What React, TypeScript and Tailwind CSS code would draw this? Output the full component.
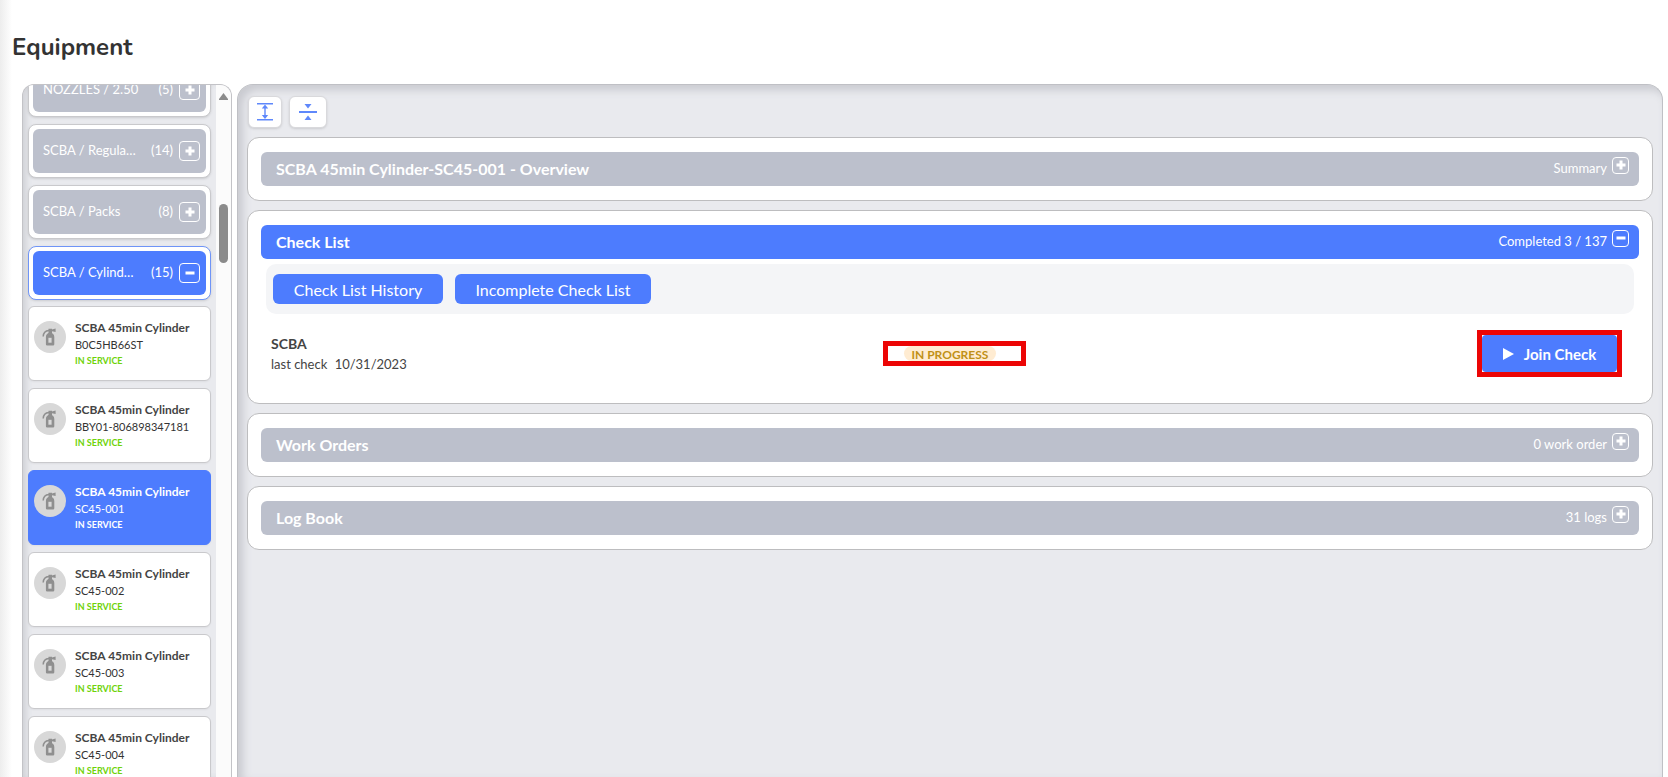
import React from "react";

type Category = { name: string; count: number; open?: boolean };

const categories: Category[] = [
  { name: "NOZZLES / 2.50", count: 5 },
  { name: "SCBA / Regulators", count: 14 },
  { name: "SCBA / Packs", count: 8 },
  { name: "SCBA / Cylinders", count: 15, open: true },
];

const items = [
  "B0C5HB66ST",
  "BBY01-806898347181",
  "SC45-001",
  "SC45-002",
  "SC45-003",
  "SC45-004",
];

function Sign({ minus }: { minus?: boolean }) {
  return (
    <svg viewBox="0 0 10 10" className="size-[10px]" fill="currentColor" aria-hidden="true">
      <rect x="0.5" y="3.5" width="9" height="3" />
      {!minus && <rect x="3.5" y="0.5" width="3" height="9" />}
    </svg>
  );
}

function Extinguisher() {
  return (
    <svg viewBox="0 0 32 32" className="size-8" aria-hidden="true">
      <circle cx="16" cy="16" r="16" fill="#d8d8d8" />
      <path d="M9.2 15.600C9.300 11.500 11.200 9.600 15 9.400" fill="none" stroke="#8f8f8f" strokeWidth="1.500" />
      <path d="M14.500 7.800h3.500v.7l3.600-.9v3.500l-3.600-.8V12h-3.500z" fill="#8f8f8f" />
      <path d="M11.900 16c0-2.600 1.600-4.200 4.200-4.200s4.200 1.600 4.200 4.200v7.200a1.200 1.200 0 0 1-1.200 1.200h-6a1.200 1.200 0 0 1-1.200-1.200z" fill="#8f8f8f" />
      <rect x="14.400" y="16.800" width="3.200" height="4.900" fill="#d8d8d8" />
    </svg>
  );
}

function CategoryCard({ name, count, open }: Category) {
  return (
    <div className={`rounded-lg border bg-white p-1 shadow-sm ${open ? "border-[#6f94f7]" : "border-[#c9c9cc]"}`}>
      <button
        type="button"
        aria-expanded={!!open}
        className={`flex h-11 w-full items-center rounded-md pl-[10px] pr-[6px] text-left text-[13px] text-white ${open ? "bg-[#4d7cfe]" : "bg-[#bcc0cc]"}`}
      >
        <span className="w-24 truncate pb-px">{name}</span>
        <span className="ml-auto mr-[6px] pb-px">({count})</span>
        <span className="flex h-5 w-[21px] items-center justify-center rounded border border-white">
          <Sign minus={open} />
        </span>
      </button>
    </div>
  );
}

function ItemCard({ code, selected }: { code: string; selected: boolean }) {
  return (
    <li>
      <button
        type="button"
        className={`flex h-[75px] w-full items-start rounded-md border pl-[5px] pt-3 text-left shadow-xs ${selected ? "border-[#4d7cfe] bg-[#4d7cfe] text-white" : "border-[#c9c9cc] bg-white text-[#333]"}`}
      >
        <span className="pt-[2px]">
          <Extinguisher />
        </span>
        <span className="ml-[9px] flex flex-col">
          <span className={`text-xs font-bold leading-[17px] ${selected ? "" : "text-[#444]"}`}>SCBA 45min Cylinder</span>
          <span className="text-[11px] leading-[17px]">{code}</span>
          <span className={`text-[9px] font-bold leading-[15px] ${selected ? "" : "text-[#6fd30a]"}`}>IN SERVICE</span>
        </span>
      </button>
    </li>
  );
}

function Section({ title, info, open, children }: { title: string; info: string; open?: boolean; children?: React.ReactNode }) {
  return (
    <section className="rounded-xl border border-[#bdbdbf] bg-white px-[13px] py-[14px]">
      <button
        type="button"
        aria-expanded={!!open}
        className={`flex h-[34px] w-full items-center rounded-md pl-[15px] pr-[10px] text-white ${open ? "bg-[#4d7cfe]" : "bg-[#bcc0cc]"}`}
      >
        <span className="text-base font-bold">{title}</span>
        <span className="ml-auto flex items-start gap-[5px] pb-1 text-[13px] leading-5">
          <span className="pt-px">{info}</span>
          <span className="flex size-[17px] items-center justify-center rounded border border-white">
            <Sign minus={open} />
          </span>
        </span>
      </button>
      {children}
    </section>
  );
}

export default function App() {
  return (
    <div className="relative flex h-screen flex-col overflow-hidden bg-white font-['Lato',sans-serif] text-[#444]">
      <div className="absolute inset-y-0 left-0 w-3 bg-linear-to-r from-[#ededed] to-white" />
      <h1 className="relative pb-[20px] pl-3 pt-[30px] font-['Nunito','Noto_Sans',sans-serif] text-2xl font-bold leading-[34px] text-[#333]">Equipment</h1>
      <div className="relative flex min-h-0 flex-1 gap-[5px] pl-[22px] pr-[5px]">
        <aside className="flex w-[210px] shrink-0 overflow-hidden rounded-t-xl border border-b-0 border-[#c3c3c7] bg-[#e9eaee] shadow-[inset_5px_0_6px_-2px_#cfd0d5]">
          <div className="min-w-0 flex-1 pl-[5px] pr-[5px]">
            <div className="-mt-[22px] flex flex-col gap-[7px]">
              {categories.map((c) => (
                <CategoryCard key={c.name} {...c} />
              ))}
            </div>
            <ul className="mt-[6px] flex flex-col gap-[7px]">
              {items.map((code) => (
                <ItemCard key={code} code={code} selected={code === "SC45-001"} />
              ))}
            </ul>
          </div>
          <div className="flex w-[15px] flex-col items-center bg-[#fbfbfb] pt-[8px]">
            <svg viewBox="0 0 9 7" className="h-[7px] w-[9px]" fill="#8b8b8b" aria-hidden="true">
              <path d="M4.500 0 9 6v1H0V6z" />
            </svg>
            <div className="mt-[104px] h-[59px] w-[9px] rounded-full bg-[#8b8b8b]" />
          </div>
        </aside>
        <main className="min-w-0 flex-1 rounded-t-2xl border border-b-0 border-[#bfc0c5] bg-[#e9eaee] px-[9px] pt-[11px] shadow-[inset_5px_5px_8px_#c9cad0]">
          <div className="flex gap-[7px] pl-px">
            <button type="button" aria-label="Expand all" className="flex h-8 w-[34px] items-center justify-center rounded-md border border-[#d9d9dc] bg-white shadow-sm">
              <svg viewBox="0 0 18 18" className="size-[18px]" fill="#5f88fb" aria-hidden="true">
                <rect x="1" y="0" width="16" height="1.500" />
                <rect x="1" y="16" width="16" height="1.500" />
                <rect x="8.300" y="4" width="1.400" height="10" />
                <path d="M9 1.500 12.200 5.500H5.800z" />
                <path d="M9 16 12.200 12H5.800z" />
              </svg>
            </button>
            <button type="button" aria-label="Collapse all" className="flex h-8 w-[38px] items-center justify-center rounded-md border border-[#d9d9dc] bg-white shadow-sm">
              <svg viewBox="0 0 18 18" className="size-[18px]" fill="#5f88fb" aria-hidden="true">
                <path d="M0 8h18v2H0zM5.500 1h7L9 5.500zM5.500 17h7L9 12.500z" />
              </svg>
            </button>
          </div>
          <div className="mt-[9px] flex flex-col gap-[9px]">
            <Section title="SCBA 45min Cylinder-SC45-001 - Overview" info="Summary" />
            <Section title="Check List" info="Completed 3 / 137" open>
              <div className="mx-[5px] mt-[5px] flex h-[50px] items-center gap-3 rounded-[10px] bg-[#f4f5f7] px-[7px]">
                <button type="button" className="h-[30px] w-[170px] rounded-md bg-[#4d7cfe] pt-px text-base text-white">Check List History</button>
                <button type="button" className="h-[30px] w-[196px] rounded-md bg-[#4d7cfe] pt-px text-base text-white">Incomplete Check List</button>
              </div>
              <div className="flex items-center pb-[12px] pl-[10px] pr-[17px] pt-4">
                <div className="w-[45%] pr-1 text-[13px] leading-5">
                  <div className="text-sm font-bold leading-5">SCBA</div>
                  <div>
                    last check <span className="ml-1">10/31/2023</span>
                  </div>
                </div>
                <div className="ml-1 h-[25px] w-[143px] border-[5px] border-[#ec0505] pl-4">
                  <span className="block h-[15px] w-[92px] rounded-full bg-[#ffecd2] text-center text-xs font-bold leading-[18px] text-[#c09016]">IN PROGRESS</span>
                </div>
                <div className="ml-auto border-[5px] border-[#ec0505]">
                  <button type="button" className="flex h-[37px] w-[135px] items-center justify-center gap-[10px] rounded bg-[#4d7cfe] pt-px text-[15px] font-bold text-white">
                    <svg viewBox="0 0 11 12" className="h-3 w-[11px]" fill="currentColor" aria-hidden="true">
                      <path d="M0 0 11 6 0 12z" />
                    </svg>
                    Join Check
                  </button>
                </div>
              </div>
            </Section>
            <Section title="Work Orders" info="0 work order" />
            <Section title="Log Book" info="31 logs" />
          </div>
        </main>
      </div>
    </div>
  );
}
